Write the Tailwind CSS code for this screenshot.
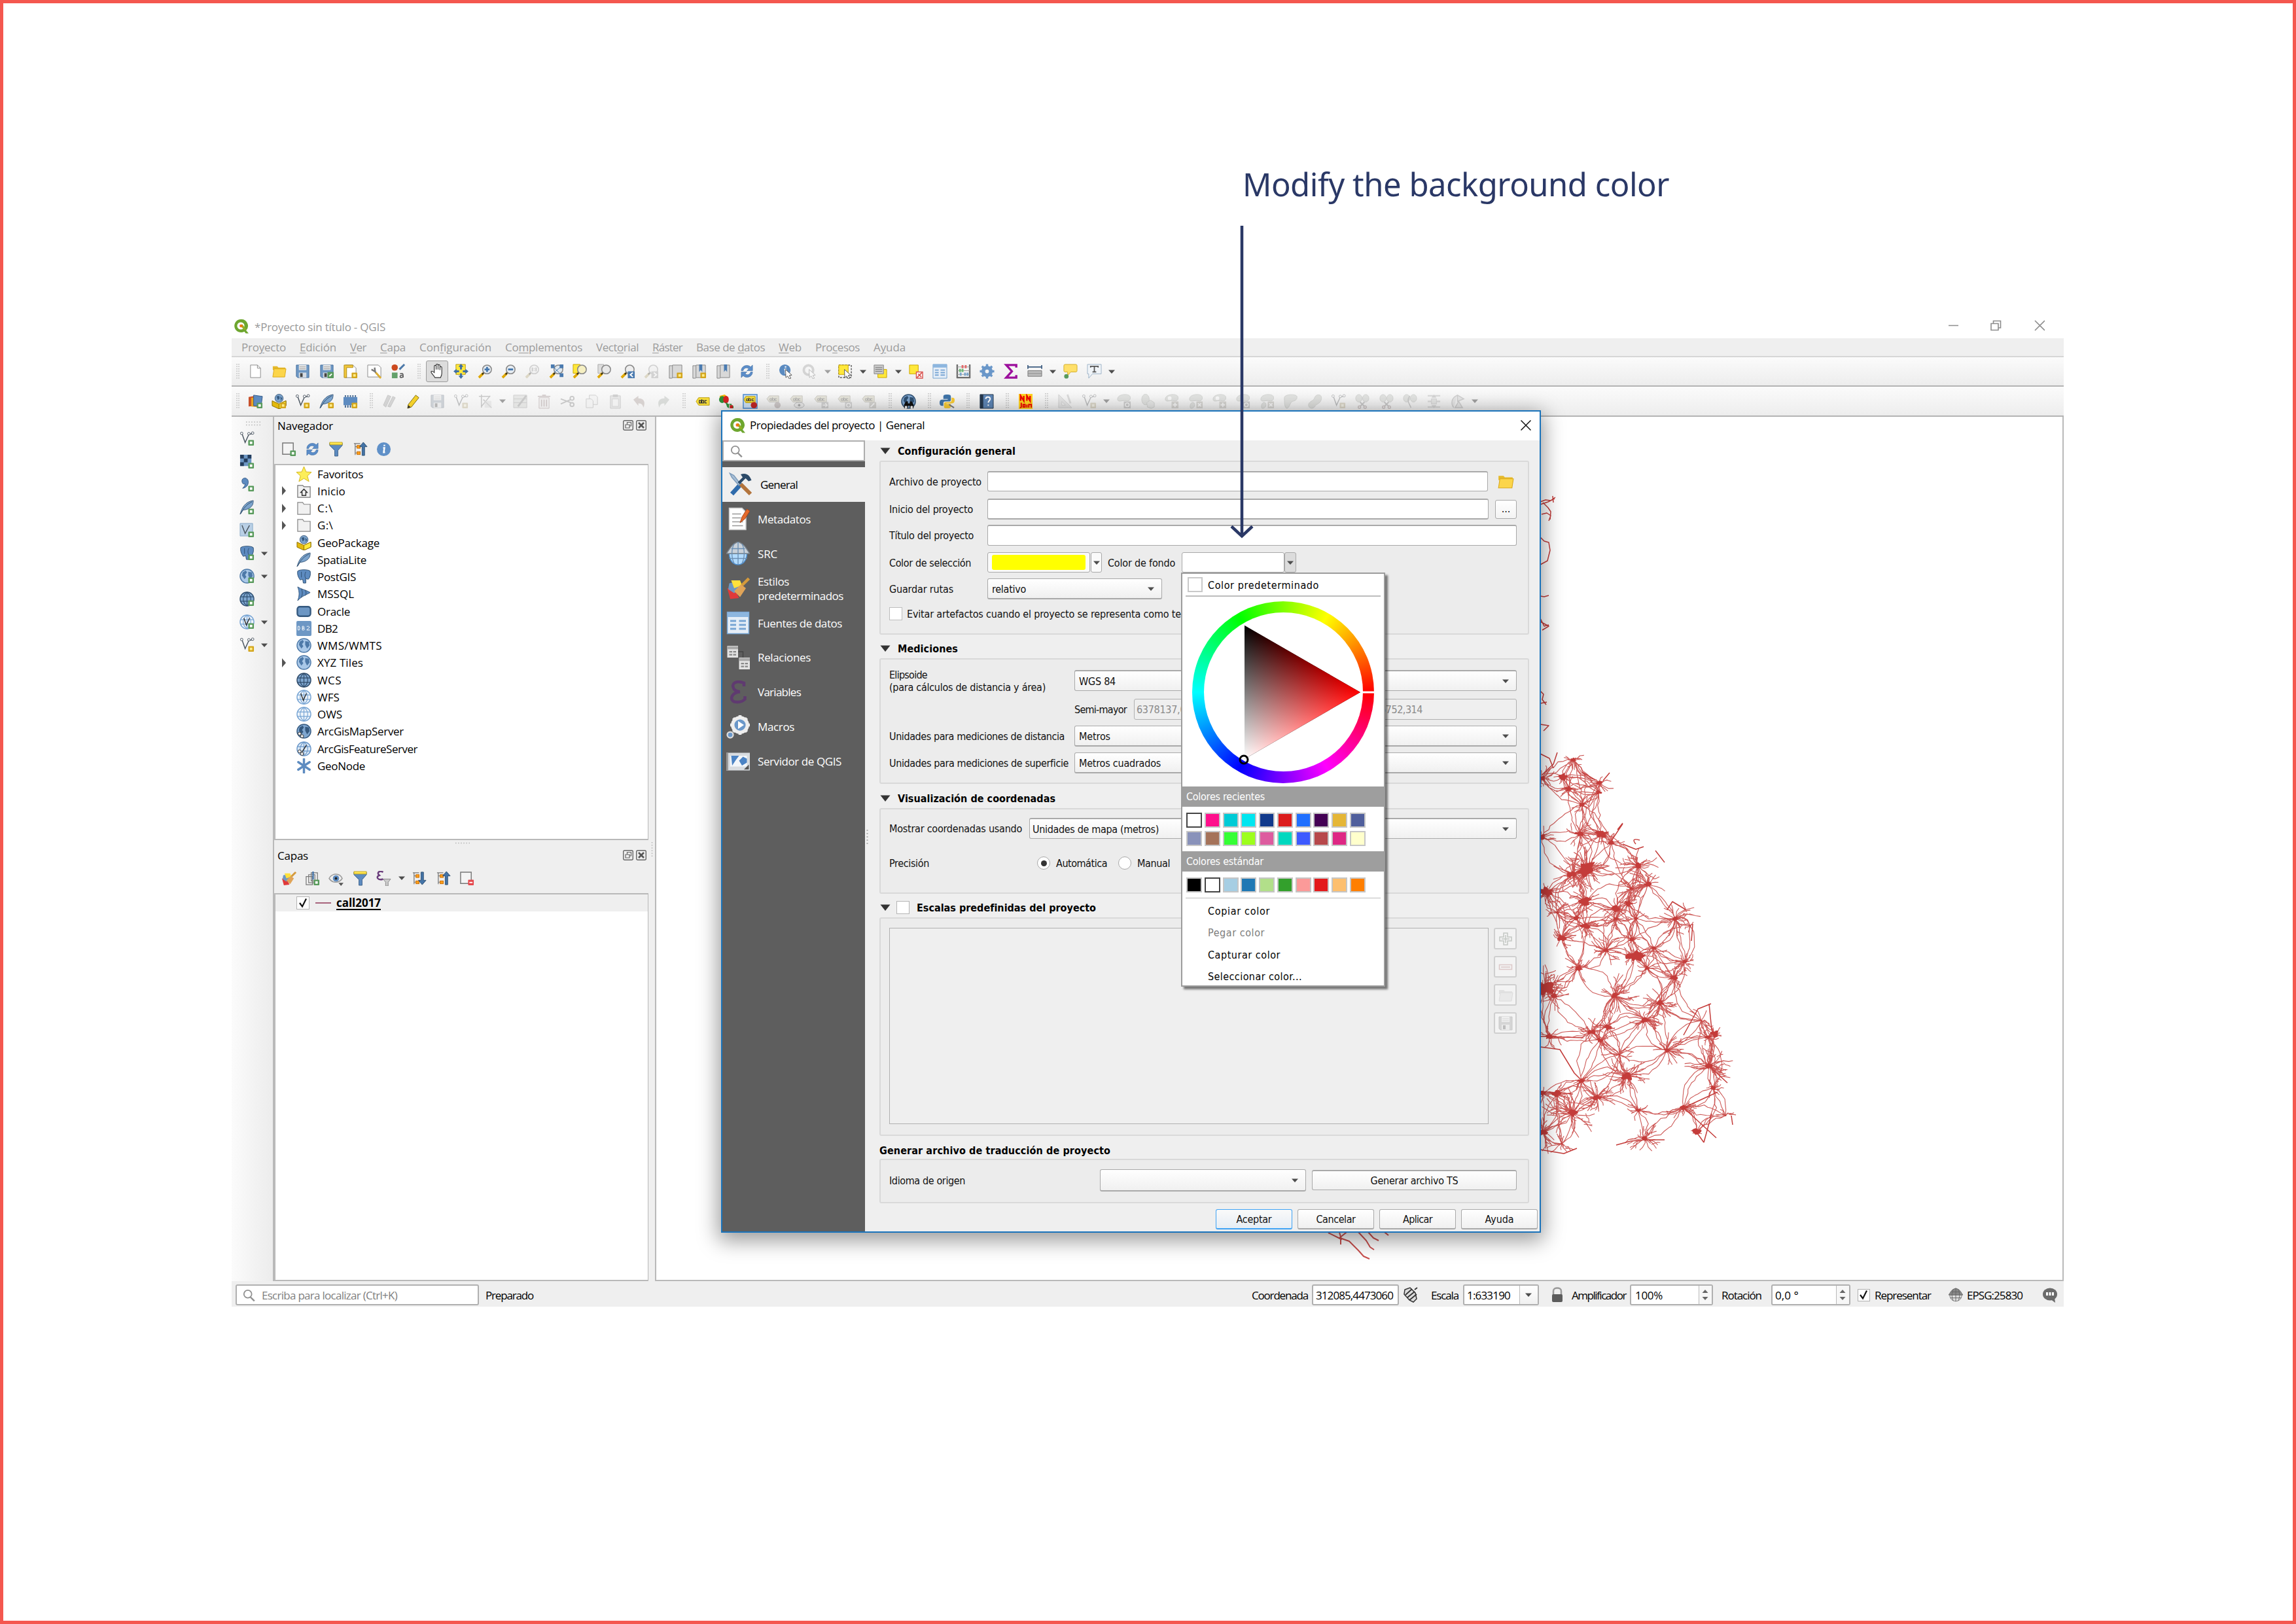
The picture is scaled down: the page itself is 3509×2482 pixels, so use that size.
<!DOCTYPE html>
<html lang="es">
<head>
<meta charset="utf-8">
<title>Propiedades del proyecto | General</title>
<script src="https://cdn.jsdelivr.net/npm/@tailwindcss/browser@4"></script>
</head>
<body class="bg-white">
<main class="relative w-[3509px] h-[2482px] overflow-hidden border-[5px] border-[#f4574f] bg-white font-['Open_Sans','Noto_Sans',sans-serif] text-[17px] leading-none text-black">

<!-- main window -->
<section class="absolute left-[349px] top-[475px] w-[2800px] h-[1517px] flex flex-col bg-white">
  <header class="h-[37px] flex items-center text-[#999]">
    <svg data-i="qgis" viewBox="0 0 24 24" class="ml-[3px] size-[23px]"></svg>
    <span data-w="200" class="ml-[9px] mt-[2px]">*Proyecto sin título - QGIS</span>
    <svg class="ml-auto mr-[29px] mb-[3px] w-[150px] h-[20px]" viewBox="0 0 150 20" fill="none" stroke="#8c8c8c" stroke-width="1.6"><path d="M3 10.500h15M68 7.500h11v10h-11zM71.500 7v-3.500h11v10.500h-3M135 3l15 15M150 3l-15 15"/></svg>
  </header>
  <nav id="menu" class="h-[29px] pl-[15px] flex items-center gap-[21px] bg-[#efefef] border-b-2 border-[#d6d6d6] text-[#9b9b9b]"></nav>
  <div data-bar="h file folder save saveas layout layoutmgr style H hand! pan zoomin zoomout zoom11- zoomfull zoomsel zoomlayer zoomlast zoomnext- newbook bookadd book refresh H identify identifyrun- a- select a selform a desel table abacus gear sigma measure a tip textann a" class="h-[45px] flex items-center bg-linear-to-b from-[#fbfbfb] to-[#ededed] border-b-2 border-[#b3b3b3]"></div>
  <div data-bar="h datasrc gpkgadd vnew feathernew memnew H pencils- pencil save- vnew- node- a- tableedit- trash- cut- copy- paste- undo- redo- H abc diagram abcpin abco1- abco2- abco3- abco4- abco5- H metasearch H python H help H nnjoin H ruler- vnew- a- sh1- sh2- sh3- sh4- sh3- sh1- sh4- sh5- sh6- vnew- sh7- sh7- sh8- sh9- sh10- a-" class="h-[46px] flex items-center bg-linear-to-b from-[#fbfbfb] to-[#ededed] border-b-2 border-[#b3b3b3]"></div>

  <div class="flex h-[1321px]">
    <aside class="w-[63px] bg-linear-to-r from-[#fbfbfb] to-[#ececec] flex flex-col items-start">
      <svg class="ml-[21px] mt-1.5 w-[26px] h-[8px] shrink-0"><path d="M1 2h24M1 6.500h24" stroke="#b5b5b5" stroke-width="1.500" stroke-dasharray="1.500 2.600"/></svg>
      <div id="strip" class="mt-[2px] flex flex-col"></div>
    </aside>

    <div class="w-[584px] border-l-2 border-[#b9b9b9] bg-[#efefef] flex flex-col">
      <div class="h-[26px] pl-[5px] pr-[13px] flex items-center">
        <span data-w="85">Navegador</span>
        <svg data-i="float" viewBox="0 0 16 16" class="ml-auto size-4"></svg><svg data-i="close" viewBox="0 0 16 16" class="ml-1 size-4"></svg>
      </div>
      <div data-bar="newlayer refresh filter collapse info" class="h-[46px] pl-[4px] flex items-center"></div>
      <div id="tree" class="h-[575px] mr-[10px] bg-white border-2 border-r border-[#b9b9b9]"></div>
      <div class="relative h-[46px] pl-[5px] pr-[13px] flex items-center">
        <svg class="absolute left-[276px] top-[3px] w-[26px] h-[3px]"><path d="M1 1.500h24" stroke="#b5b5b5" stroke-width="1.500" stroke-dasharray="1.500 2.600"/></svg>
        <svg class="absolute left-[576px] top-[2px] w-[3px] h-[26px]"><path d="M1.500 1v24" stroke="#b5b5b5" stroke-width="1.500" stroke-dasharray="1.500 2.600"/></svg>
        <span data-w="47">Capas</span>
        <svg data-i="float" viewBox="0 0 16 16" class="ml-auto size-4"></svg><svg data-i="close" viewBox="0 0 16 16" class="ml-1 size-4"></svg>
      </div>
      <div data-bar="brush group eye filter epsfilter a expand collapse removelayer" class="h-[35px] pl-[4px] pb-[11px] flex items-center"></div>
      <div class="flex-1 mr-[10px] bg-white border-2 border-r border-[#b9b9b9]">
        <div class="h-[26px] bg-[#efefef] flex items-center">
          <span class="ml-[32px] size-5 bg-white border border-[#b5b5b5] flex items-center justify-center"><svg data-i="check" viewBox="0 0 16 16" class="size-4"></svg></span>
          <span class="ml-[9px] w-[24px] h-[1.5px] bg-[#a8647c]"></span>
          <span data-w="68" class="ml-2 font-bold border-b-2 border-black leading-[19px]">call2017</span>
        </div>
      </div>
    </div>

    <div class="flex-1 overflow-hidden bg-white border-l-2 border-r-2 border-b-2 border-[#b9b9b9]">
      <svg id="map" class="w-[2149px] h-[1319px]" viewBox="1003 637 2149 1319" fill="none" stroke="#c43c3a" stroke-linejoin="round"></svg>
    </div>
  </div>

  <footer class="h-[39px] pt-[3px] bg-[#efefef] flex items-center whitespace-nowrap">
    <div class="ml-[6px] w-[372px] h-8 rounded-[3px] bg-white border-2 border-[#b0b0b0] flex items-center text-[#808080]">
      <svg data-i="search" viewBox="0 0 16 16" class="ml-[9px] size-[19px]"></svg><span data-w="207" class="ml-[10px]">Escriba para localizar (Ctrl+K)</span>
    </div>
    <span data-w="73" class="ml-[10px]">Preparado</span>
    <span data-w="86" class="ml-auto">Coordenada</span>
    <div class="ml-[6px] w-[133px] h-8 rounded-[3px] bg-white border-2 border-[#b0b0b0] pl-1 flex items-center"><span data-w="118">312085,4473060</span></div>
    <svg data-i="mouse" viewBox="0 0 24 24" class="ml-[6px] size-6"></svg>
    <span data-w="42" class="ml-[19px]">Escala</span>
    <div class="ml-[7px] w-[116px] h-8 rounded-[3px] bg-white border-2 border-[#b0b0b0] pl-1 flex items-center"><span data-w="66">1:633190</span><span class="ml-auto w-[28px] h-full border-l border-[#bbb] bg-linear-to-b from-white to-[#f0f0f0] flex items-center justify-center"><svg data-i="down" viewBox="0 0 12 12" class="size-3"></svg></span></div>
    <svg data-i="lock" viewBox="0 0 20 24" class="ml-[18px] w-5 h-6"></svg>
    <span data-w="83" class="ml-[12px]">Amplificador</span>
    <div class="ml-[6px] w-[127px] h-8 rounded-[3px] bg-white border-2 border-[#b0b0b0] pl-1.5 flex items-center"><span data-w="42">100%</span><span class="ml-auto w-[20px] h-full border-l border-[#bbb] bg-[#f7f7f7] flex items-center justify-center"><svg data-i="spin" viewBox="0 0 12 24" class="w-3 h-6"></svg></span></div>
    <span data-w="61" class="ml-[13px]">Rotación</span>
    <div class="ml-[15px] w-[121px] h-8 rounded-[3px] bg-white border-2 border-[#b0b0b0] pl-1 flex items-center"><span data-w="36">0,0 °</span><span class="ml-auto w-[20px] h-full border-l border-[#bbb] bg-[#f7f7f7] flex items-center justify-center"><svg data-i="spin" viewBox="0 0 12 24" class="w-3 h-6"></svg></span></div>
    <span class="ml-[11px] size-[19px] bg-white border border-[#b0b0b0] flex items-center justify-center"><svg data-i="check" viewBox="0 0 16 16" class="size-4"></svg></span>
    <span data-w="86" class="ml-[7px]">Representar</span>
    <svg data-i="globegray" viewBox="0 0 24 24" class="ml-[27px] size-[22px]"></svg>
    <span data-w="85" class="ml-[6px]">EPSG:25830</span>
    <svg data-i="bubble" viewBox="0 0 24 24" class="ml-[30px] mr-[9px] size-6"></svg>
  </footer>
</section>

<!-- project properties dialog -->
<section class="absolute left-[1097px] top-[622px] w-[1253px] h-[1257px] flex flex-col bg-[#efefef] border-2 border-[#1a73bb] shadow-[0_8px_30px_4px_rgba(0,0,0,0.4)]">
  <header class="h-[44px] shrink-0 bg-white flex items-center">
    <svg data-i="qgis" viewBox="0 0 24 24" class="ml-[11px] mb-[3px] size-6"></svg>
    <span data-w="267" class="ml-[7px] mb-[3px]">Propiedades del proyecto | General</span>
    <svg class="ml-auto mr-[13px] mb-[3px] size-4" viewBox="0 0 16 16" stroke="#111" stroke-width="1.500"><path d="M.500.500l15 15M15.500.500l-15 15"/></svg>
  </header>
  <div class="flex flex-1">
    <aside class="w-[218px] bg-[#5e5e5e] flex flex-col text-white">
      <div class="h-8 mb-[9px] bg-white border-2 border-[#adadad] flex items-center text-[#909090]"><svg data-i="search" viewBox="0 0 16 16" class="ml-[10px] size-[19px]"></svg></div>
      <div id="tabs" class="flex flex-col"></div>
    </aside>

    <div class="relative w-[1031px] pl-[22px] pr-[16px] flex flex-col whitespace-nowrap font-['DejaVu_Sans_Condensed','DejaVu_Sans',sans-serif] [font-stretch:condensed] text-[16px] text-[#111] [&_[data-w]]:translate-y-px">
      <svg class="absolute left-[2px] top-[594px] w-[3px] h-[26px]"><path d="M1.500 1v24" stroke="#b0b0b0" stroke-width="2" stroke-dasharray="2 3"/></svg>

      <div class="h-[31px] pl-[1px] flex items-center font-bold text-black"><svg data-i="down2" viewBox="0 0 16 12" class="w-4 h-3"></svg><span data-w="180" class="ml-[11px]">Configuración general</span></div>
      <div class="h-[266px] shrink-0 border-2 border-[#d9d9d9] rounded-[3px] bg-[#ececec] pl-[13px] pt-[14px]">
        <div class="h-[31px] flex items-center"><span class="w-[150px]"><span data-w="141">Archivo de proyecto</span></span><span class="w-[765px] h-[31px] rounded-[3px] bg-white border border-t-2 border-[#a9a9a9]"></span><svg data-i="folder" viewBox="0 0 24 24" class="ml-[14px] size-[26px]"></svg></div>
        <div class="mt-[11px] h-8 flex items-center"><span class="w-[150px]"><span data-w="128">Inicio del proyecto</span></span><span class="w-[766px] h-8 rounded-[3px] bg-white border border-y-2 border-[#a9a9a9]"></span><span class="ml-[10px] w-[33px] h-[29px] rounded-[3px] border border-[#a9a9a9] bg-linear-to-b from-white to-[#f3f3f3] flex items-center justify-center">...</span></div>
        <div class="mt-[8px] h-8 flex items-center"><span class="w-[150px]"><span data-w="129">Título del proyecto</span></span><span class="w-[809px] h-8 rounded-[3px] bg-white border border-t-2 border-[#a9a9a9]"></span></div>
        <div class="mt-[10px] h-[31px] flex items-center"><span class="w-[150px]"><span data-w="125">Color de selección</span></span>
          <span class="w-[157px] h-[31px] rounded-[3px] border border-[#a9a9a9] bg-[#fafafa] p-[3px] px-[6px] flex"><span class="flex-1 rounded-[3px] bg-[#ffff00]"></span></span><span class="ml-[1px] w-[17px] h-[31px] rounded-[3px] border border-[#a9a9a9] bg-[#fafafa] flex items-center justify-center"><svg data-i="down" viewBox="0 0 12 12" class="size-3"></svg></span>
          <span data-w="103" class="ml-[9px]">Color de fondo</span>
          <span class="ml-[10px] w-[157px] h-[31px] rounded-[3px] border border-[#a9a9a9] bg-white"></span><span class="w-[18px] h-[31px] rounded-[3px] border border-[#a9a9a9] bg-[#dcdcdc] flex items-center justify-center"><svg data-i="down" viewBox="0 0 12 12" class="size-3"></svg></span></div>
        <div class="mt-[9px] h-8 flex items-center"><span class="w-[150px]"><span data-w="98">Guardar rutas</span></span><span class="w-[267px] h-8 pl-[6px] pr-[10px] rounded-[3px] border border-b-2 border-[#a9a9a9] bg-linear-to-b from-white to-[#f0f0f0] flex items-center justify-between"><span data-w="52">relativo</span><svg data-i="down" viewBox="0 0 12 12" class="size-3"></svg></span></div>
        <div class="mt-[12px] h-5 flex items-center"><span class="size-5 bg-white border border-[#bdbdbd]"></span><span data-w="419" class="ml-[7px]">Evitar artefactos cuando el proyecto se representa como te</span></div>
      </div>

      <div class="h-[36px] pl-[1px] pt-[6px] flex items-center font-bold text-black"><svg data-i="down2" viewBox="0 0 16 12" class="w-4 h-3"></svg><span data-w="92" class="ml-[11px]">Mediciones</span></div>
      <div class="h-[192px] shrink-0 border-2 border-[#d9d9d9] rounded-[3px] bg-[#ececec] pl-[13px] pt-[16px]">
        <div class="h-8 flex items-center"><span class="w-[283px] leading-[19px]"><span data-w="58">Elipsoide</span><br><span data-w="239">(para cálculos de distancia y área)</span></span><span class="w-[676px] h-8 pl-[6px] pr-[10px] rounded-[3px] border border-t-2 border-[#a9a9a9] bg-linear-to-b from-white to-[#f0f0f0] flex items-center justify-between"><span data-w="56">WGS 84</span><svg data-i="down" viewBox="0 0 12 12" class="size-3"></svg></span></div>
        <div class="mt-[12px] h-8 pl-[283px] flex items-center"><span class="w-[91px]"><span data-w="80">Semi-mayor</span></span><span class="w-[250px] h-8 pl-[3px] rounded-[3px] border border-[#b0b0b0] bg-[#efefef] flex items-center text-[#8a8a8a]"><span data-w="93">6378137,000</span></span><span class="ml-[95px] w-[240px] h-8 pl-[4px] rounded-[3px] border border-[#b0b0b0] bg-[#efefef] flex items-center text-[#8a8a8a]"><span data-w="91">6356752,314</span></span></div>
        <div class="mt-[9px] h-8 flex items-center"><span class="w-[283px]"><span data-w="268">Unidades para mediciones de distancia</span></span><span class="w-[676px] h-8 pl-[6px] pr-[10px] rounded-[3px] border border-b-2 border-[#a9a9a9] bg-linear-to-b from-white to-[#f0f0f0] flex items-center justify-between"><span data-w="48">Metros</span><svg data-i="down" viewBox="0 0 12 12" class="size-3"></svg></span></div>
        <div class="mt-[9px] h-8 flex items-center"><span class="w-[283px]"><span data-w="274">Unidades para mediciones de superficie</span></span><span class="w-[676px] h-8 pl-[6px] pr-[10px] rounded-[3px] border border-b-2 border-[#a9a9a9] bg-linear-to-b from-white to-[#f0f0f0] flex items-center justify-between"><span data-w="125">Metros cuadrados</span><svg data-i="down" viewBox="0 0 12 12" class="size-3"></svg></span></div>
      </div>

      <div class="h-[37px] pl-[1px] pt-[7px] flex items-center font-bold text-black"><svg data-i="down2" viewBox="0 0 16 12" class="w-4 h-3"></svg><span data-w="241" class="ml-[11px]">Visualización de coordenadas</span></div>
      <div class="h-[131px] shrink-0 border-2 border-[#d9d9d9] rounded-[3px] bg-[#ececec] pl-[13px] pt-[13px]">
        <div class="h-8 flex items-center"><span class="w-[214px]"><span data-w="203">Mostrar coordenadas usando</span></span><span class="w-[745px] h-8 pl-[4px] pr-[10px] rounded-[3px] border border-t-2 border-[#a9a9a9] bg-linear-to-b from-white to-[#f0f0f0] flex items-center justify-between"><span data-w="193">Unidades de mapa (metros)</span><svg data-i="down" viewBox="0 0 12 12" class="size-3"></svg></span></div>
        <div class="mt-[27px] h-5 flex items-center"><span class="w-[226px]"><span data-w="61">Precisión</span></span><span class="size-5 rounded-full bg-white border border-[#a9a9a9] flex items-center justify-center"><span class="size-[9px] rounded-full bg-[#333]"></span></span><span data-w="78" class="ml-[9px]">Automática</span><span class="ml-[17px] size-5 rounded-full bg-white border border-[#a9a9a9]"></span><span data-w="50" class="ml-[9px]">Manual</span></div>
      </div>

      <div class="h-[36px] pl-[1px] pt-[6px] flex items-center font-bold text-black"><svg data-i="down2" viewBox="0 0 16 12" class="w-4 h-3"></svg><span class="ml-[9px] size-5 bg-white border border-[#b5b5b5]"></span><span data-w="274" class="ml-[11px]">Escalas predefinidas del proyecto</span></div>
      <div class="h-[334px] shrink-0 border-2 border-[#d9d9d9] rounded-[3px] bg-[#ececec] pl-[13px] pt-[14px] flex items-start">
        <div class="w-[916px] h-[300px] border border-[#b0b0b0] bg-[#efefef]"></div>
        <div class="ml-2 flex flex-col gap-[10px]">
          <span class="w-[35px] h-[33px] rounded-[3px] border-2 border-[#cfcfcf] bg-[#f3f3f3] flex items-center justify-center"><svg viewBox="0 0 24 24" class="size-6" fill="none" stroke="#c4c8c4" stroke-width="1.500"><path d="M9 3h6v6h6v6h-6v6H9v-6H3V9h6zM12 6v12M6 12h12"/></svg></span>
          <span class="w-[35px] h-[33px] rounded-[3px] border-2 border-[#cfcfcf] bg-[#f3f3f3] flex items-center justify-center"><svg viewBox="0 0 24 24" class="size-6" fill="none" stroke="#dcc8c8" stroke-width="1.500"><path d="M2.500 8.500h19v7h-19zM5 12h14"/></svg></span>
          <span class="w-[35px] h-[33px] rounded-[3px] border-2 border-[#cfcfcf] bg-[#f3f3f3] flex items-center justify-center"><svg data-i="folder" viewBox="0 0 24 24" class="size-6 opacity-30 grayscale"></svg></span>
          <span class="w-[35px] h-[33px] rounded-[3px] border-2 border-[#cfcfcf] bg-[#f3f3f3] flex items-center justify-center"><svg data-i="save" viewBox="0 0 24 24" class="size-6 opacity-30 grayscale"></svg></span>
        </div>
      </div>

      <div class="h-[35px] pt-[8px] flex items-center font-bold text-black"><span data-w="353">Generar archivo de traducción de proyecto</span></div>
      <div class="h-[68px] shrink-0 border-2 border-[#d9d9d9] rounded-[3px] bg-[#ececec] pl-[13px] pt-[14px] flex items-start">
        <span class="w-[322px] h-[34px] flex items-center"><span data-w="116">Idioma de origen</span></span>
        <span class="w-[315px] h-[34px] pr-[10px] rounded-[3px] border border-b-2 border-[#a9a9a9] bg-linear-to-b from-white to-[#f0f0f0] flex items-center justify-end"><svg data-i="down" viewBox="0 0 12 12" class="size-3"></svg></span>
        <span class="ml-[9px] w-[313px] h-[31px] mt-px rounded-[3px] border border-t-2 border-[#a9a9a9] bg-linear-to-b from-white to-[#f0f0f0] flex items-center justify-center"><span data-w="134">Generar archivo TS</span></span>
      </div>
      <div class="mt-[9px] mr-[-13px] flex justify-end gap-[8px] *:w-[117px] *:h-[31px] *:rounded-[3px] *:flex *:items-center *:justify-center *:border *:border-b-2">
        <span class="border-[#3fa3f5] bg-linear-to-b from-[#fafafa] to-[#e6edf4]"><span data-w="54">Aceptar</span></span>
        <span class="border-[#a9a9a9] bg-linear-to-b from-white to-[#f0f0f0]"><span data-w="60">Cancelar</span></span>
        <span class="border-[#a9a9a9] bg-linear-to-b from-white to-[#f0f0f0]"><span data-w="45">Aplicar</span></span>
        <span class="border-[#a9a9a9] bg-linear-to-b from-white to-[#f0f0f0]"><span data-w="44">Ayuda</span></span>
      </div>

      <!-- colour menu -->
      <div class="absolute left-[483px] top-[202px] w-[312px] h-[633px] bg-white border-2 border-[#9c9c9c] shadow-[4px_4px_3px_rgba(0,0,0,0.5)] flex flex-col text-black">
        <div class="h-[33px] shrink-0 pl-[8px] flex items-center"><span class="size-[23px] border-2 border-[#c9c9c9]"></span><span data-w="170" class="ml-[8px]">Color predeterminado</span></div>
        <div class="mx-[5px] h-[1.5px] shrink-0 bg-[#bdbdbd]"></div>
        <div class="relative ml-[15px] mt-[7px] size-[278px] shrink-0 rounded-full bg-[conic-gradient(from_90deg,#f00,#f0f,#00f,#0ff,#0f0,#ff0,#f00)]">
          <div class="absolute inset-[17.5px] rounded-full bg-white"></div>
          <svg class="absolute inset-0 size-[278px] isolate" viewBox="0 0 278 278">
            <defs>
              <linearGradient id="gr" gradientUnits="userSpaceOnUse" x1="80" y1="37" x2="168.500" y2="190"><stop stop-color="#000"/><stop offset="1" stop-color="#f00"/></linearGradient>
              <linearGradient id="gw" gradientUnits="userSpaceOnUse" x1="168.500" y1="88" x2="80" y2="241"><stop stop-color="#000"/><stop offset="1" stop-color="#0ff"/></linearGradient>
            </defs>
            <path d="M80 37L257 139L80 241z" fill="url(#gr)"/>
            <path class="mix-blend-screen" d="M80 37L257 139L80 241z" fill="url(#gw)"/>
            <path d="M260 139h18" stroke="#fff" stroke-width="3"/>
            <circle cx="79" cy="242" r="6" fill="none" stroke="#000" stroke-width="3"/>
          </svg>
        </div>
        <div class="mt-[5px] h-[31px] shrink-0 pl-[6px] bg-[#9e9e9e] flex items-center text-white"><span data-w="120">Colores recientes</span></div>
        <div id="recent" class="h-[68px] shrink-0 pt-[9px] pl-[6px] grid grid-cols-[repeat(10,27.75px)] auto-rows-[28px]"></div>
        <div class="h-[31px] shrink-0 pl-[6px] bg-[#9e9e9e] flex items-center text-white"><span data-w="118">Colores estándar</span></div>
        <div id="standard" class="h-[40px] shrink-0 pt-[9px] pl-[6px] grid grid-cols-[repeat(10,27.75px)]"></div>
        <div class="mx-[5px] h-[1.5px] shrink-0 bg-[#bdbdbd]"></div>
        <div class="pl-[39px] pt-[2px] *:h-[33.5px] *:flex *:items-center">
          <div><span data-w="95">Copiar color</span></div>
          <div class="text-[#7d7d7d]"><span data-w="87">Pegar color</span></div>
          <div><span data-w="111">Capturar color</span></div>
          <div><span data-w="144">Seleccionar color...</span></div>
        </div>
      </div>
    </div>
  </div>
</section>

<!-- callout -->
<p data-w="652" class="absolute left-[1894px] top-[246px] text-[49px] leading-[60px] whitespace-nowrap text-[#2a3866] font-['Noto_Sans',sans-serif]">Modify the background color</p>
<svg class="absolute left-[1873px] top-[339px] w-[40px] h-[482px]" viewBox="1878 344 40 482" fill="none" stroke="#2a3866" stroke-width="4.500"><path d="M1898 345v474M1882 804.500l16 15 16-15"/></svg>
</main>

<script>
const badge = (c, f = '#fff') => `<rect x="14" y="14" width="9" height="9" rx="1" fill="${c}"/><rect x="16.500" y="16.500" width="4" height="4" fill="${f}"/>`;
const G = badge('#589a5b'), Y = badge('#d3a51c', '#ffec8b');
const paper = '<path d="M4 2h11l5 5v15H4z" fill="#fff" stroke="#8a8a8a"/><path d="M15 2v5h5" fill="none" stroke="#8a8a8a"/>';
const floppy = '<path d="M2 2h20v20H4l-2-2z" fill="#6d97c4" stroke="#456f9c"/><path d="M6 2h12v8H6z" fill="#e8e8e8"/><path d="M7 5h10M7 8h10" stroke="#9a9a9a"/><path d="M6 14h12v8H6z" fill="#d5dce4"/><path d="M8 15h4v6H8z" fill="#444"/>';
const lens = (f, x = '') => `<path d="M2 22l7-7" stroke="#e0a800" stroke-width="4"/><path d="M7 17l3-3" stroke="#222" stroke-width="2"/><circle cx="15" cy="9" r="7" fill="${f}" stroke="#888" stroke-width="1.600"/>${x}`;
const vee = '<path d="M4 4l5 14L15 5l6-1" fill="none" stroke="#4a5560" stroke-width="1.500"/><g fill="#fff" stroke="#4a5560"><circle cx="3.500" cy="3.500" r="2"/><circle cx="15" cy="4" r="2"/><circle cx="21" cy="3" r="2"/></g>';
const feather = '<path d="M1 23C4 12 9 3 22 1c0 5-1 9-6 12-3 2-7 3-10 3z" fill="#7ba3cc" stroke="#3c5a7a"/><path d="M2 22C7 12 12 7 20 3" stroke="#2f4d6c" fill="none"/>';
const globe = (a, b, l) => `<circle cx="12" cy="12" r="11" fill="${a}" stroke="${b}" stroke-width="1.500"/>${l ? `<path d="M12 1v22M1.500 8.500h21M1.500 15.500h21M12 1C4 7 4 17 12 23M12 1c8 6 8 16 0 22" stroke="${b}" stroke-width="1.200" fill="none"/>` : `<path d="M5 6l5-3 2 3-3 4 2 3-3 4-4-6zM14 5l6 1 1 6-4 5-3-6z" fill="${b}"/>`}`;
const box = '<path d="M1 11l11 5 11-5v8l-11 5-11-5z" fill="#e3b90d" stroke="#8a6d00"/><path d="M12 16l11-5v8l-11 5z" fill="#ffe83b" stroke="#8a6d00"/><circle cx="12" cy="7" r="6.500" fill="#7ba3cc" stroke="#3c5a7a"/><path d="M8 4l4-1 1 4-3 3zM14 4l3 3-2 4z" fill="#35597f"/>';
const gearP = '<circle cx="12" cy="12" r="6" fill="none" stroke="#6a97c9" stroke-width="6"/><path d="M12 .500v5M12 18.500v5M.500 12h5M18.500 12h5M4 4l3.500 3.500M16.500 16.500L20 20M20 4l-3.500 3.500M7.500 16.500L4 20" stroke="#6a97c9" stroke-width="3.600"/>';
const arrowP = '<path d="M11 9l10 9-4 .500 2.500 4.500-2.500 1-2.500-4.500-3 2.500z" fill="#fff" stroke="#555"/>';
const book = '<path d="M2 3h4l2-1h14v20H8l-2 1H2z" fill="#d8d8d8" stroke="#858585"/><path d="M7 2v20" stroke="#858585"/>';
const tag = '<path d="M2 12l4-6h17v12H6z" fill="#f6dd3a" stroke="#b89b10"/><path d="M7 14.500v-4h3v4zm4-6v6h3v-4h-3m8 0h-3v4h3" fill="none" stroke="#333" stroke-width="1.300"/>';
const tagS = '<path d="M1 8l4-5h15v10H5z" fill="#d9c96a" stroke="#8a8050"/><path d="M6 10.500v-3h3v3zm4-5v5h3v-3h-3m7 0h-3v3h3" fill="none" stroke="#333"/>';
const grp = '<path d="M4 3v18M4 8h5M4 18h5M2 3h10" stroke="#777" fill="none" stroke-width="1.300"/><rect x="7" y="6" width="5" height="4.500" fill="#ff9f1c" stroke="#c76d00"/><rect x="7" y="16" width="5" height="4.500" fill="#ff9f1c" stroke="#c76d00"/>';
const blob = '<path d="M2 8c0-8 18-9 20-4 2 6-3 8-6 7-5-2-14 4-14-3z" fill="#b9c3b2" stroke="#8f9a88"/>';
const blob2 = '<path d="M3 20c0-7 6-8 7-4s-2 7-5 7c-2 0-2-1-2-3z" fill="#b9c3b2" stroke="#8f9a88"/>';
const I = {
  qgis: '<path d="M11.500 1A10.500 10.500 0 1 0 17 20.600l2.500 2.900H24l-4-4.800A10.500 10.500 0 0 0 11.500 1z" fill="#6ea62f"/><circle cx="11.500" cy="11.500" r="5.800" fill="#fff"/><path d="M10 10.500l4-1.500 6 8-3 1z" fill="#93b023"/><circle cx="12" cy="11.500" r="2.500" fill="#ee7913"/>',
  file: paper,
  folder: '<path d="M2 4h7l2 2h11v4H2z" fill="#e5b92b"/><path d="M4 8h19l-2 13H2z" fill="#fcd54a" stroke="#d9a91d"/>',
  save: floppy,
  saveas: floppy + '<rect x="13" y="13" width="10" height="10" rx="1" fill="#589a5b"/><path d="M16 20l4-4" stroke="#fff" stroke-width="2"/>',
  layout: '<path d="M4 2h12l5 5v15H4z" fill="#fff" stroke="#8a8a8a"/><path d="M2 2h14v4H6v16H2z" fill="#f0c63c" stroke="#b18d16"/>' + Y,
  layoutmgr: '<path d="M1 2h17l4 4v15H1z" fill="#fff" stroke="#8a8a8a"/><path d="M7 9l5 3M12 6l1 7 8 9" stroke="#777" stroke-width="2.500" fill="none"/><path d="M14 14l8 9" stroke="#e0b030" stroke-width="3"/>',
  style: '<circle cx="6.500" cy="6" r="5" fill="#cc4a1f"/><path d="M14 9l8-8" stroke="#4c78a8" stroke-width="3"/><rect x="2" y="14" width="9" height="9" fill="#63a06a"/><path d="M15 16c5-2 5 0 5 6M20 18c-6 0-6 4-3 4 2 0 3-2 3-2" fill="none" stroke="#555" stroke-width="1.600"/>',
  hand: '<path d="M8 22c-1-3-6-7-6-9s3-1 5 1V4c0-2 3-2 3 0v5V2c0-2 3-2 3 0v7-6c0-2 3-2 3 0v7-4c0-2 3-2 3 0v9c0 3-1 5-2 7z" fill="#fff" stroke="#333" stroke-width="1.200"/>',
  pan: '<path d="M4 1h15v16H4z" fill="#ffe83b" stroke="#b89b10"/><path d="M12 0l4 5h-2.500v4h-3V5H8zM12 24l4-5h-2.500v-4h-3v4H8zM0 12l5-4v2.500h4v3H5V16zM24 12l-5-4v2.500h-4v3h4V16z" fill="#3f6fa5"/>',
  zoomin: lens('#e6ecf2', '<path d="M15 5v8M11 9h8" stroke="#4577ad" stroke-width="3"/>'),
  zoomout: lens('#e6ecf2', '<path d="M11 9h8" stroke="#4577ad" stroke-width="3"/>'),
  zoom11: lens('#eee', '<path d="M12 6v6M18 6v6M15 7v1M15 10v1" stroke="#666" stroke-width="1.500"/>'),
  zoomfull: lens('#dfe8f0') + '<path d="M3 1h6v6H3zM17 1h6v6h-6zM17 15h6v6h-6z" fill="#4b7bb0"/><path d="M6 4l14 14M20 4L8 14" stroke="#4b7bb0"/>',
  zoomsel: '<path d="M1 1h11v14H1z" fill="#ffe83b" stroke="#c9a500"/>' + lens('#f5efc2'),
  zoomlayer: '<path d="M2 1h9v14H2z" fill="#ddd" stroke="#aaa"/>' + lens('#e8e8e8'),
  zoomlast: lens('#eee') + '<rect x="12" y="12" width="11" height="11" fill="#4b7bb0"/><path d="M20 14l-4 3.500 4 3.500" stroke="#fff" stroke-width="2" fill="none"/>',
  zoomnext: lens('#eee') + '<rect x="12" y="12" width="11" height="11" fill="#999"/><path d="M16 14l4 3.500-4 3.500" stroke="#fff" stroke-width="2" fill="none"/>',
  newbook: book + Y, bookadd: book + '<path d="M12 1h5v12l-2.500-3L12 13z" fill="#4b7bb0"/>' + Y, book: book + '<path d="M13 1h5v12l-2.500-3-2.500 3z" fill="#4b7bb0"/>',
  refresh: '<path d="M3 11C3 3 13 0 18 5l3-3v9h-9l3-3c-4-3-8-1-9 3zM21 13c0 8-10 11-15 6l-3 3v-9h9l-3 3c4 3 8 1 9-3z" fill="#5b8dc9" stroke="#39679e" stroke-width=".6"/>',
  identify: '<circle cx="10" cy="10" r="9" fill="#5a8ac0"/><path d="M11 4v2M9 9h2v6h2" stroke="#fff" stroke-width="2.400" fill="none"/>' + arrowP,
  identifyrun: '<circle cx="10" cy="10" r="7.500" fill="none" stroke="#999" stroke-width="4"/>' + arrowP,
  select: '<path d="M2 2h20v20H2z" fill="none" stroke="#555" stroke-dasharray="3 2" stroke-width="1.500"/><path d="M2 2h15v15H2z" fill="#ffe83b" stroke="#c9a500"/>' + arrowP,
  selform: '<path d="M8 9h14v13H8z" fill="#ffe83b" stroke="#c9a500"/><path d="M2 2h15v14H2z" fill="#c9c9c9" stroke="#888"/><path d="M4 6h11M4 9h11M4 12h11" stroke="#777"/>',
  desel: '<path d="M2 2h14v14H2z" fill="#ffe83b" stroke="#c9a500"/><path d="M13 13h10v10H13z" fill="#fff" stroke="#d9534f" stroke-width="1.500"/><path d="M14 22l8-8M16 16l5 5" stroke="#d9534f" stroke-width="1.800"/>',
  table: '<path d="M1 1h22v22H1z" fill="#e6eef7" stroke="#6f9fcf"/><path d="M1 1h22v5H1z" fill="#8db6df"/><path d="M4 10h6M4 14h6M4 18h6M13 10h7M13 14h7M13 18h7" stroke="#78a5d4" stroke-width="2"/>',
  abacus: '<path d="M2 1v22M22 1v22M1 22h22" stroke="#6d6d6d" stroke-width="2.500"/><path d="M2 5h20M2 11h20M2 17h20" stroke="#999"/><path d="M9 2h3v5H9zM14 2h3v5h-3z" fill="#e36b6b"/><path d="M5 8h3v5H5zM9 8h3v5H9z" fill="#6dbb78"/><path d="M6 14h3v5H6zM13 14h3v5h-3zM17 14h3v5h-3z" fill="#7aa5cc"/>',
  gear: gearP,
  sigma: '<path d="M20 6V2H4l9 10L4 22h16v-4" fill="none" stroke="#9c0f9c" stroke-width="3.500"/>',
  measure: '<path d="M1 5h22M1 2v6M23 2v6" stroke="#3d5c80" stroke-width="1.800"/><path d="M1 11h22v9H1z" fill="#bcbcbc" stroke="#777"/><path d="M1 15.500h22" stroke="#8b8b8b"/>',
  tip: '<path d="M4 1h17q2 0 2 2v8q0 2-2 2h-8l-5 6v-6H4q-2 0-2-2V3q0-2 2-2z" fill="#ffe06a" stroke="#d1ad2b"/><circle cx="6" cy="20" r="3.500" fill="#589a5b"/>',
  textann: '<path d="M1 1h22v15H9l-6 7v-7H1z" fill="#f0f4f8" stroke="#9db3c8"/><path d="M6 6V4h12v2M12 4v9M9 13h6" stroke="#555" stroke-width="1.800" fill="none"/>',
  datasrc: '<path d="M1 5l10-2v16l-10 1z" fill="#c7502b"/><path d="M5 6h12v15l-12-1z" fill="#e8a521"/><path d="M9 2l14 2-2 15H9z" fill="#5d8bc0" stroke="#345a86"/>' + G,
  gpkg: box, gpkgadd: box + Y, vnew: vee + Y, vadd: vee + G, feather, feathernew: feather + Y, featheradd: feather + G,
  memnew: '<path d="M1 5h22v13H1z" fill="#5d8bc0"/><path d="M4 2v3M8 2v3M12 2v3M16 2v3M20 2v3M4 18v4M8 18v4M12 18v4" stroke="#345a86" stroke-width="1.800"/>' + Y,
  pencils: '<path d="M2 18L9 2l5 2-8 17zM9 20l8-16 4 2-8 15z" fill="#999" stroke="#777"/>',
  pencil: '<path d="M3 17L15 2l5 4L8 21l-6 2z" fill="#f3d02b" stroke="#7c6a10"/><path d="M2 23l1-5 4 3z" fill="#333"/>',
  node: '<path d="M2 4h18M6 1v21M6 20L20 3M9 9l13 13" stroke="#777" stroke-width="1.600"/><path d="M11 11h11v11H11z" fill="#bbb" opacity=".6"/>',
  tableedit: '<path d="M1 2h21v20H1z" fill="#c6ccc0" stroke="#888"/><path d="M1 8h21M1 14h21" stroke="#888"/><path d="M8 20L21 3" stroke="#777" stroke-width="3"/>',
  trash: '<path d="M4 6h16v17H4z" fill="#eadede" stroke="#a66"/><path d="M2 4h20M9 2h6M8 9v11M12 9v11M16 9v11" stroke="#a66" stroke-width="1.600"/>',
  cut: '<path d="M1 8l16 6M1 16l16-7" stroke="#777" stroke-width="2"/><g fill="none" stroke="#777" stroke-width="2"><circle cx="19" cy="7" r="3"/><circle cx="19" cy="17" r="3"/></g>',
  copy: '<path d="M8 2h10l3 3v12H8z" fill="#eee" stroke="#888"/><path d="M3 8h8l3 3v11H3z" fill="#eee" stroke="#888"/>',
  paste: '<path d="M4 3h16v20H4z" fill="#ccc" stroke="#888"/><path d="M8 1h8v4H8z" fill="#888"/><path d="M7 8h10v12H7z" fill="#eee" stroke="#999"/>',
  undo: '<path d="M2 9l8-6v4c9 0 12 6 8 15-1-6-4-7-8-7v4z" fill="#c08c7c"/>',
  redo: '<path d="M22 9l-8-6v4c-9 0-12 6-8 15 1-6 4-7 8-7v4z" fill="#9cb09c"/>',
  abc: tag,
  diagram: '<path d="M2 3l8-2 5 4-5 5-8-2z" fill="#f5b800"/><ellipse cx="6" cy="9" rx="5" ry="5.500" fill="#2f8f3a"/><ellipse cx="12" cy="9" rx="4.500" ry="6" fill="#d62222"/><path d="M11 13l3 8 3 2v-7h4v7h3v-4h-3" fill="#2f8f3a"/><rect x="18" y="18" width="5" height="5" fill="#c22"/>',
  abcpin: '<path d="M1 1h22v22H1z" fill="#cfe3f7" stroke="#4b8bd0" stroke-width="1.500"/><path d="M2 9l3-5h15v10H5z" fill="#f6dd3a" stroke="#b89b10"/><path d="M6 11v-3h3v3zm4-5v5h3V8h-3m8 0h-3v3h3" fill="none" stroke="#333"/><circle cx="18" cy="18" r="5" fill="#c22727"/>',
  abco1: tagS + '<circle cx="18" cy="18" r="5" fill="#a77"/>', abco2: tagS + '<ellipse cx="15" cy="18" rx="8" ry="4.500" fill="#ddd" stroke="#555"/><circle cx="15" cy="18" r="2" fill="#333"/>',
  abco3: tagS + '<path d="M12 13h11v10H12z" fill="#999"/><path d="M14 18h7M18 15l3 3-3 3" stroke="#fff" fill="none" stroke-width="1.500"/>', abco4: tagS + '<path d="M12 13h11v10H12z" fill="#999"/><circle cx="17.500" cy="18" r="3" fill="none" stroke="#fff" stroke-width="1.500"/>', abco5: tagS + '<path d="M12 13h11v10H12z" fill="#a99f80"/><path d="M14 21l6-6" stroke="#fff" stroke-width="2"/>',
  metasearch: globe('#7fa6cf', '#2f5072') + '<path d="M5 17l3-5h3v3h3v-3h3l3 5v6h-6v-4h-3v4H5z" fill="#111"/><circle cx="8" cy="21" r="2" fill="#fff"/><circle cx="17" cy="21" r="2" fill="#fff"/>',
  python: '<path d="M12 1c-5 0-6 1-6 4v3h7v1H4c-3 0-4 2-4 5s1 5 4 5h2v-4c0-2 1-3 3-3h6c2 0 3-1 3-3V5c0-3-1-4-6-4z" fill="#3f74a8"/><path d="M12 23c5 0 6-1 6-4v-3h-7v-1h9c3 0 4-2 4-5s-1-4-4-4h-1v4c0 2-1 3-3 3h-6c-2 0-3 1-3 3v3c0 3 0 4 5 4z" fill="#f9cb35"/><path d="M15 17l8 5" stroke="#777" stroke-width="2"/>',
  help: '<path d="M2 1h21v22H2z" fill="#5d85b5" stroke="#26384d"/><path d="M2 1h5v22H2z" fill="#26384d"/><path d="M11 8c0-4 7-4 7 0 0 3-3 3-3 6M15 17v2" stroke="#fff" stroke-width="2" fill="none"/>',
  nnjoin: '<path d="M1 0h22v24H1z" fill="#ffd21f"/><path d="M4 11V3l5 8V3M14 11V3l5 8V3" stroke="#e00" stroke-width="2.400" fill="none"/><path d="M5 14v7l-2 1M8 17h3v4H8zM14 17v5M17 22v-5h4v5" stroke="#e00" stroke-width="2" fill="none"/>',
  ruler: '<path d="M2 1l21 21H2z" fill="#ccc" stroke="#999"/><path d="M7 12l6 6H7z" fill="#eee" stroke="#999"/><path d="M16 1l5 14" stroke="#aaa" stroke-width="3"/>',
  sh1: blob + '<path d="M12 12h11v11H12z" fill="#888"/><circle cx="17.500" cy="17.500" r="3" fill="none" stroke="#fff" stroke-width="1.500"/>',
  sh2: '<ellipse cx="8" cy="9" rx="6" ry="8.500" fill="#b9c3b2" stroke="#8f9a88"/><path d="M10 14l6-4 6 4v7l-5 2-6-2z" fill="#ccd3cc" stroke="#8f9a88"/>',
  sh3: blob + '<circle cx="9" cy="7" r="3" fill="#fff"/><path d="M12 12h11v11H12z" fill="#a99f80"/><path d="M17.500 14v7M14 17.500h7" stroke="#fff" stroke-width="2"/>',
  sh4: blob + blob2 + '<path d="M13 12h10v11H13z" fill="#a99f80"/><path d="M15.500 15l5 5M20.500 15l-5 5" stroke="#fff" stroke-width="2"/>',
  sh5: '<path d="M2 6c0-6 19-6 20-2 1 6-4 7-7 8-4 1-5 11-9 11-4 0-4-12-4-17z" fill="#b9c3b2" stroke="#8f9a88"/>',
  sh6: '<path d="M15 2c6-2 9 2 7 8s-8 6-10 10-9 4-10-1 4-7 7-9 2-6 6-8z" fill="#b4bda8" stroke="#8f9a88"/>',
  sh7: '<ellipse cx="7" cy="7" rx="5" ry="6" fill="#b9c3b2" stroke="#8f9a88"/><ellipse cx="18" cy="7" rx="5" ry="6" fill="#b9c3b2" stroke="#8f9a88"/><path d="M9 13l7 7M16 13l-7 7" stroke="#777" stroke-width="2"/><circle cx="8" cy="21" r="2" fill="none" stroke="#a66" stroke-width="1.500"/><circle cx="17" cy="21" r="2" fill="none" stroke="#a66" stroke-width="1.500"/>',
  sh8: '<ellipse cx="7" cy="7" rx="5" ry="6" fill="#b9c3b2" stroke="#8f9a88"/><ellipse cx="18" cy="7" rx="5" ry="6" fill="#b9c3b2" stroke="#8f9a88"/><path d="M12 3c-5 8-2 10 2 19" stroke="#777" stroke-width="1.500" fill="none"/>',
  sh9: '<path d="M2 3h20M2 12h20M2 21h20" stroke="#aaa" stroke-width="2.500"/><path d="M12 1l4 5H8zM12 23l4-5H8z" fill="#999"/><rect x="8" y="8" width="8" height="8" fill="#c6ccc0" stroke="#999"/>',
  sh10: '<path d="M12 2C2 6 1 16 6 22M12 2l10 6-10 4zM14 12l6 10H8z" fill="#ccc" stroke="#888" stroke-width="1.500"/>',
  raster: '<path d="M1 1h18v18H1z" fill="#6d97c4"/><path d="M1 1h6v6H1zM13 1h6v6h-6zM7 7h6v6H7zM1 13h6v6H1z" fill="#243d5c"/>' + G,
  comma: '<path d="M4 6c0-6 10-6 10 2 0 6-4 9-9 10 3-3 4-5 4-7-3 1-5-1-5-5z" fill="#5d8bc0" stroke="#345a86"/>' + G,
  virt: '<path d="M1 1h20v20H1z" fill="#b9d0e6" stroke="#88a8c8"/><path d="M4 4l5 13L16 4" fill="none" stroke="#4a5560" stroke-width="1.500"/>' + G,
  pg: '<path d="M2 3c3-3 17-3 20 0 1 5 0 10-3 13l-4-1v7h-4l-1-6-4 1C3 13 1 8 2 3z" fill="#5d8bc0" stroke="#2f5072"/><path d="M8 4v9M15 4c-2 4-2 7 0 11" stroke="#2f5072" fill="none"/>',
  wmsadd: globe('#a9c8e8', '#4d79a8') + G, wcsadd: globe('#7fa6cf', '#2f5072', 1) + G, wfsadd: globe('#edf4fb', '#78a5d4', 1) + '<path d="M7 6l4 11 5-11" fill="none" stroke="#333" stroke-width="1.500"/>' + G,
  wms: globe('#a9c8e8', '#4d79a8'), wcs: globe('#7fa6cf', '#2f4a68', 1), ows: globe('#edf4fb', '#78a5d4', 1), wfs: globe('#edf4fb', '#78a5d4', 1) + '<path d="M7 6l4 11 5-11" fill="none" stroke="#333" stroke-width="1.500"/>',
  arcm: globe('#7fa6cf', '#35597f') + '<g fill="#eee" stroke="#333"><circle cx="5" cy="16" r="2.500"/><circle cx="9" cy="20" r="2.500"/></g>', arcf: globe('#dbe9f6', '#6a97c9', 1) + '<path d="M9 17l7-11" stroke="#333" stroke-width="1.500"/><g fill="#eee" stroke="#333"><circle cx="5" cy="16" r="2.500"/><circle cx="9" cy="20" r="2.500"/></g>',
  geonode: '<path d="M12 1v22M3 6l18 12M21 6L3 18" stroke="#5d8bc0" stroke-width="3.600" stroke-linecap="round"/>',
  mssql: '<path d="M2 1c6 4 14 5 20 9-6 4-13 5-20 13 3-8 3-14 0-22z" fill="#5d8bc0" stroke="#35597f"/><path d="M8 4c2 5 2 8 0 14M14 6c2 4 2 6 0 9" stroke="#2f4d6c" fill="none"/>',
  oracle: '<rect x="1.500" y="4.500" width="21" height="15" rx="4" fill="#6d97c4" stroke="#35597f" stroke-width="2.500"/>',
  db2: '<rect x="0" y="0" width="24" height="24" rx="2" fill="#6d97c4"/><path d="M2.500 8.500v6h2q2-3 0-6zM9.500 8.500v6h2.500q2-1.500 0-3h-2.500 2q2-1.500 0-3zM16.500 9q4-1.500 4 1.500l-4 4h5" fill="none" stroke="#fff"/>',
  star: '<path d="M12 0l3.500 8.500L24 9l-6.500 6L20 24l-8-5-8 5 2.500-9L0 9l8.500-.500z" fill="#fcee5a" stroke="#d3b51c"/>',
  home: '<path d="M2 3h8l2 2h10v17H2z" fill="#f1f1f1" stroke="#777" stroke-width="1.300"/><path d="M7 14l5-5 5 5h-2v5H9v-5z" fill="none" stroke="#333" stroke-width="1.500"/>',
  dir: '<path d="M2 3h8l2 3h10v16H2z" fill="#f1f1f1" stroke="#888" stroke-width="1.300"/>',
  newlayer: '<path d="M2 2h17v18H2z" fill="#f4f4f4" stroke="#777" stroke-width="1.500"/>' + G,
  removelayer: '<path d="M2 2h17v18H2z" fill="#f4f4f4" stroke="#777" stroke-width="1.500"/><rect x="14" y="14" width="9" height="9" rx="1" fill="#e5484d"/><path d="M16 18.500h5" stroke="#fff" stroke-width="2"/>',
  filter: '<path d="M2 2h20v4l-7 8v9h-5v-9L2 6z" fill="#5d8bc0" stroke="#3c618a"/><path d="M2 1h20v4H2z" fill="#ffe44d" stroke="#b89b10" stroke-width=".8"/>',
  collapse: grp + '<path d="M17 1l6 7h-4v14h-4V8h-4z" fill="#4474a8" stroke="#2f5072"/>',
  expand: grp + '<path d="M17 22l6-7h-4V2h-4v13h-4z" fill="#4474a8" stroke="#2f5072"/>',
  info: '<circle cx="12" cy="12" r="11" fill="#5f90c8"/><path d="M13 5v2M11 10h2l-1 7h2" stroke="#fff" stroke-width="2.600" fill="none"/>',
  brush: '<path d="M1 12l8 2 4 8-9 1z" fill="#e03a3a"/><path d="M3 7l8-2 5 6-8 6-6-4z" fill="#6d97c4"/><path d="M5 4h9l2 5-8 3z" fill="#ffe13b"/><path d="M8 15l7-7 5 4-6 9z" fill="#e0a458"/><path d="M16 9l7-7" stroke="#d59a3c" stroke-width="3"/>',
  group: '<path d="M2 9h10v13H2zM6 6h10v13H6zM10 3h10v13H10z" fill="#f2f2f2" stroke="#777" stroke-width="1.300"/><path d="M13 14V1" stroke="#4474a8" stroke-width="2.500"/>' + G,
  eye: '<path d="M1 12c5-9 17-9 21 0-5 8-16 8-21 0z" fill="#eee" stroke="#999" stroke-width="1.500"/><circle cx="12" cy="12" r="5" fill="#5d8bc0"/><circle cx="12" cy="12" r="2" fill="#222"/><path d="M16 19h8l-4 5z" fill="#555"/>',
  epsfilter: '<path d="M11 2C5-1 0 3 5 7c-6 2-3 9 6 6" fill="none" stroke="#6a3d7c" stroke-width="2.600"/><path d="M11 13h12l-4 5v6h-4v-6z" fill="#ccc" stroke="#888"/>',
  float: '<rect x=".7" y=".7" width="14.600" height="14.600" rx="2" fill="none" stroke="#666" stroke-width="1.400"/><path d="M4 7h6v5H4zM6.500 6.500V3.500h6v5.500h-2" fill="none" stroke="#666" stroke-width="1.200"/>',
  close: '<rect x=".7" y=".7" width="14.600" height="14.600" rx="2" fill="none" stroke="#666" stroke-width="1.400"/><path d="M4 4l8 8M12 4l-8 8" stroke="#555" stroke-width="2.600"/>',
  check: '<path d="M3 8l4 5.500 6-12" fill="none" stroke="#111" stroke-width="2.200"/>',
  search: '<circle cx="6.500" cy="6.500" r="5" fill="none" stroke="#909090" stroke-width="1.500"/><path d="M10 10.500l5 5" stroke="#909090" stroke-width="2"/>',
  down: '<path d="M1 3.500h10L6 9z" fill="#4d4d4d"/>',
  down2: '<path d="M.500 1.500h15L8 11z" fill="#333"/>',
  right: '<path d="M3 0l6 7-6 7z" fill="#555"/>',
  spin: '<path d="M1.500 9L6 4l4.500 5zM1.500 15L6 20l4.500-5z" fill="#666"/>',
  mouse: '<path d="M3 4l8-3 8 8 2 9-5 5-6-3-8-9z" fill="#ddd" stroke="#333" stroke-width="1.500"/><path d="M4 12L14 3M7 16l11-9M10 20l11-9M18 4l4-3" stroke="#333" stroke-width="1.800"/>',
  lock: '<path d="M4 12V6c0-6 12-6 12 0v6" fill="none" stroke="#999" stroke-width="2.500"/><rect x="2" y="11" width="16" height="12" rx="2" fill="#5c5c5c"/>',
  globegray: '<path d="M2 12h20c0 14-20 14-20 0z" fill="#ddd" stroke="#777"/><path d="M0 12C3 9 4 3 12 1c8 2 9 8 12 11z" fill="#888" stroke="#666"/><path d="M12 1v22M5 7h14M3 17h18M8 2.500c-3 6-3 14 0 19.500M16 2.500c3 6 3 14 0 19.500" stroke="#666" fill="none"/>',
  bubble: '<ellipse cx="12" cy="11" rx="11" ry="9.500" fill="#6b6b6b"/><path d="M12 18l8 6-1-8z" fill="#6b6b6b"/><g fill="#fff"><rect x="6" y="8" width="3" height="5"/><rect x="10.500" y="8" width="3" height="5"/><rect x="15" y="8" width="3" height="5"/></g>',
  tools: '<path d="M3 22L13 11" stroke="#2f6bab" stroke-width="4.500"/><path d="M1 1l4 2 7 9-2 1L3 5z" fill="#a9bfd6" stroke="#7d9cbb"/><path d="M12 12l10 10" stroke="#b3743c" stroke-width="4"/><path d="M12 2c5-2 9 0 11 6l-3 1-3-3-6 6-2-2 5-5z" fill="#2c4a68"/>',
  meta: '<path d="M3 1h13l4 4v18H3z" fill="#fff" stroke="#ccc"/><path d="M6 7h9M6 11h9M6 15h11M6 19h11" stroke="#999"/><path d="M14 16l2-6 5-8 3 2-5 8z" fill="#e56a2c" stroke="#a84516" stroke-width=".6"/>',
  crs: '<path d="M3 12h18c0 15-18 15-18 0z" fill="#b3dcff" stroke="#4d8fd0"/><path d="M0 12C3 9 4 3 12 0c8 3 9 9 12 12z" fill="#c9d1d9" stroke="#78828c"/><path d="M12 0v23M5 7h14M3 17h18M8 2c-3 6-3 14 0 20M16 2c3 6 3 14 0 20" stroke="#6b8fb3" fill="none" stroke-width=".9"/>',
  rel: '<path d="M12 6h5v6" stroke="#444" fill="none"/><path d="M1 0h11v12H1zM13 12h11v12H13z" fill="#e3e3e3"/><path d="M1 2h11M13 14h11" stroke="#aaa" stroke-width="3"/><path d="M3 6h7M3 9h7M15 18h7M15 21h7" stroke="#888" stroke-width="1.500" stroke-dasharray="3 1"/>',
  eps: '<path d="M18 6V2.500C10-.500 4 3 8 9c2 2 4 2.500 6 2.500C4 12 2 23 12 22c3 0 5-1 7-3v-3" fill="none" stroke="#5f3a70" stroke-width="3"/>',
  macro: '<circle cx="14" cy="10" r="7.500" fill="#6a97c9" stroke="#eee" stroke-width="3.500"/><path d="M14 0v3M14 17v3M4 10h3M21 10h3M7 3l2 2M19 15l2 2M21 3l-2 2M7 17l2-2" stroke="#eee" stroke-width="3"/><path d="M12 6l6 4-6 4z" fill="#fff"/><circle cx="4" cy="20" r="3" fill="#6a97c9" stroke="#ddd" stroke-width="1.500"/>',
  server: '<path d="M0 3h24v18H0z" fill="#d8dce0"/><path d="M4 6h17v11H4z" fill="#f2f6fa"/><path d="M5 6h8l-3 4-4 6zM13 11l4-4 4 2v4l-5 3z" fill="#4b83c4"/><path d="M1 3v18" stroke="#999" stroke-width="2"/><path d="M18 20l5-5v5z" fill="#555"/>'
};
const svg = (n, cls) => `<svg viewBox="0 0 24 24" class="${cls}">${I[n]}</svg>`;
const arrow = o => `<span class="w-[17.6px] shrink-0 flex justify-center ${o ? 'opacity-50' : ''}"><svg viewBox="0 0 12 12" class="size-3">${I.down}</svg></span>`;
const dots = '<svg class="w-[5px] h-[26px]"><path d="M1 1v24M4 1v24" stroke="#b5b5b5" stroke-width="1.300" stroke-dasharray="1.500 2"/></svg>';

document.querySelectorAll('[data-bar]').forEach(bar => {
  bar.innerHTML = bar.dataset.bar.split(' ').map(t => {
    if (t === 'h') return `<span class="w-[18px] flex justify-center">${dots}</span>`;
    if (t === 'H') return `<span class="w-[23.5px] pl-[4px] flex justify-center">${dots}</span>`;
    if (t[0] === 'a' && t.length < 3) return arrow(t[1]);
    const off = t.endsWith('-'), on = t.endsWith('!'), n = t.replace(/[-!]/, '');
    return `<span class="w-[36.4px] shrink-0 flex items-center justify-center">${on ? `<span class="w-[34px] h-[33px] shrink-0 rounded-[3px] border border-[#9d9d9d] bg-[#dcdcdc] flex items-center justify-center">${svg(n, 'size-[23px]')}</span>` : svg(n, off ? 'size-[23px] opacity-35 grayscale-[70%]' : 'size-[23px]')}</span>`;
  }).join('');
});
document.querySelectorAll('svg[data-i]').forEach(s => s.innerHTML = I[s.dataset.i]);

document.getElementById('menu').innerHTML = [['Pro', 'y', 'ecto', 68], ['', 'E', 'dición', 56], ['', 'V', 'er', 25], ['', 'C', 'apa', 39], ['Con', 'f', 'iguración', 110], ['Co', 'm', 'plementos', 118], ['Vect', 'o', 'rial', 65], ['', 'R', 'áster', 46], ['Base de ', 'd', 'atos', 105], ['', 'W', 'eb', 35], ['Pro', 'c', 'esos', 68], ['A', 'y', 'uda', 49]]
  .map(m => `<span data-w="${m[3]}" class="whitespace-nowrap">${m[0]}<span class="underline underline-offset-2">${m[1]}</span>${m[2]}</span>`).join('');

document.getElementById('strip').innerHTML = ['vadd', 'raster', 'comma', 'featheradd', 'virt', 'pg+a', 'wmsadda', 'wcsadd', 'wfsadda', 'vnewa']
  .map(n => { const a = /a$/.test(n) && n !== 'comma' && n !== 'raster', k = n.replace(/a$/, m => a ? '' : m), p = k === 'pg+';
    return `<span class="h-[35px] pl-[12px] flex items-center"><svg viewBox="0 0 24 24" class="size-[23px]">${p ? I.pg + G : I[k]}</svg>${a ? `<svg viewBox="0 0 12 12" class="ml-[9px] size-3">${I.down}</svg>` : ''}</span>`; }).join('');

document.getElementById('tree').innerHTML = [['star', 'Favoritos', 70], ['home', 'Inicio', 43, 1], ['dir', 'C:\\', 24, 1], ['dir', 'G:\\', 24, 1], ['gpkg', 'GeoPackage', 95], ['feather', 'SpatiaLite', 75], ['pg', 'PostGIS', 59], ['mssql', 'MSSQL', 56], ['oracle', 'Oracle', 50], ['db2', 'DB2', 31], ['wms', 'WMS/WMTS', 99], ['wms', 'XYZ Tiles', 70, 1], ['wcs', 'WCS', 37], ['wfs', 'WFS', 34], ['ows', 'OWS', 38], ['arcm', 'ArcGisMapServer', 132], ['arcf', 'ArcGisFeatureServer', 153], ['geonode', 'GeoNode', 73]]
  .map(r => `<div class="h-[26.26px] flex items-center"><span class="w-[25px] flex justify-center">${r[3] ? `<svg viewBox="0 0 12 14" class="w-3 h-3.5">${I.right}</svg>` : ''}</span>${svg(r[0], 'ml-[7px] size-[23px]')}<span data-w="${r[2]}" class="ml-[9px] whitespace-nowrap">${r[1]}</span></div>`).join('');

document.getElementById('tabs').innerHTML = [['tools', [['General', 57]]], ['meta', [['Metadatos', 81]]], ['crs', [['SRC', 30]]], ['brush', [['Estilos', 48], ['predeterminados', 131]]], ['table', [['Fuentes de datos', 129]]], ['rel', [['Relaciones', 81]]], ['eps', [['Variables', 66]]], ['macro', [['Macros', 56]]], ['server', [['Servidor de QGIS', 128]]]]
  .map((t, i) => `<div class="h-[52.9px] flex items-center ${i ? 'pl-[6px]' : 'pl-[10px] bg-[#efefef] text-black'}">${svg(t[0], 'size-9 shrink-0')}<span class="ml-3 flex flex-col items-start gap-[5px]">${t[1].map(l => `<span data-w="${l[1]}" class="whitespace-nowrap">${l[0]}</span>`).join('')}</span></div>`).join('');

const swatch = c => `<span class="w-[24px] h-[23px] border-2 ${c === '#ffffff' ? 'border-[#444]' : 'border-[#c6c6c6]'}" style="background:${c}"></span>`;
document.getElementById('recent').innerHTML = ['#ffffff', '#ff0f8c', '#00cbd6', '#00e6f0', '#123a8c', '#dc1c1c', '#2070ff', '#440154', '#e5b636', '#505f9c', '#8992ba', '#a5735a', '#35ff35', '#9dff1c', '#dd5c9f', '#00d8bf', '#3d5aff', '#b7484b', '#de2784', '#ffffcc'].map(swatch).join('');
document.getElementById('standard').innerHTML = ['#000000', '#ffffff', '#a6cee3', '#1f78b4', '#b2df8a', '#33a02c', '#fb9a99', '#e31a1c', '#fdbf6f', '#ff7f00'].map(swatch).join('');

/* call network: hubs [x, y, rays, reach, core size] joined to their neighbours */
let seed = 11;
const rnd = () => (seed = (seed * 16807) % 2147483647) / 2147483647;
const hubs = [[2405,1161,9,16,4],[2389,1187,5,10,7],[2397,1205,10,22,5],[2357,1189,14,26,5],[2445,1196,9,24,4],[2443,1211,4,8,4],[2418,1230,8,16,4],[2414,1274,12,22,6],[2448,1275,8,18,9],[2463,1288,8,22,4],[2357,1279,8,24,5],[2425,1328,34,38,17],[2404,1336,24,32,8],[2503,1323,18,32,5],[2518,1352,22,34,5],[2363,1363,16,28,11],[2423,1377,14,24,9],[2470,1389,10,22,6],[2488,1381,10,20,6],[2493,1358,8,22,3],[2470,1404,12,24,4],[2423,1415,14,26,7],[2410,1403,7,18,4],[2560,1404,22,36,4],[2387,1433,14,24,7],[2455,1452,20,30,4],[2498,1461,12,20,12],[2494,1436,6,12,4],[2412,1479,14,26,6],[2517,1480,9,20,4],[2528,1449,8,18,3],[2558,1494,14,20,6],[2575,1470,16,16,3],[2362,1510,34,40,14],[2374,1522,12,24,5],[2468,1522,26,38,5],[2537,1533,20,28,6],[2515,1559,20,26,6],[2432,1577,14,24,6],[2367,1584,10,24,6],[2457,1570,10,22,5],[2445,1590,10,18,4],[2547,1605,18,30,4],[2610,1585,10,22,4],[2621,1580,12,14,6],[2612,1629,32,36,5],[2487,1645,28,40,8],[2417,1652,8,18,5],[2379,1671,8,18,6],[2440,1677,20,32,6],[2573,1693,14,28,5],[2618,1662,12,16,4],[2403,1701,34,44,7],[2593,1729,5,10,6],[2504,1697,10,18,3],[2513,1740,16,30,4],[2358,1731,18,38,6],[2358,1671,6,14,5],[2387,1748,9,22,1],[2637,1705,4,14,1],[2600,1560,5,22,1],[2583,1415,5,10,1],[2475,1612,8,30,1],[2380,1395,9,26,2],[2500,1404,7,18,3]];
let thin = '', core = '';
const wig = (x0, y0, x1, y1, a, b = 0) => { let s = `M${x0.toFixed(1)} ${y0.toFixed(1)}`; const d = Math.hypot(x1 - x0, y1 - y0) || 1, n = Math.max(3, d / 7 | 0), c = (rnd() - .5) * b;
  for (let i = 1; i <= n; i++) { const o = Math.sin(i / n * 3.14) * c, e = i < n ? a : 0; s += `L${(x0 + (x1 - x0) * i / n - (y1 - y0) / d * o + (rnd() - .5) * e).toFixed(1)} ${(y0 + (y1 - y0) * i / n + (x1 - x0) / d * o + (rnd() - .5) * e).toFixed(1)}`; } return s; };
hubs.forEach(([x, y, n, L, c], k) => {
  for (let i = 0; i < n; i++) { const t = rnd() * 6.283, l = L * (.3 + rnd() * .8); thin += wig(x, y, x + Math.cos(t) * l, y + Math.sin(t) * l * .85, 3, l * .3);
    if (rnd() > .6) { const q = l * .6, u = t + (rnd() - .5) * 1.3; thin += wig(x + Math.cos(t) * q, y + Math.sin(t) * q * .85, x + Math.cos(u) * (q + 10), y + Math.sin(u) * (q + 10) * .85, 3); } }
  let p = ''; for (let i = 0; i < 14; i++) { const r = c * (.4 + rnd() * .8), t = i / 14 * 6.283; p += (i ? 'L' : 'M') + (x + Math.cos(t) * r * 1.1).toFixed(1) + ' ' + (y + Math.sin(t) * r * .75).toFixed(1); } core += p + 'z';
  hubs.map((h, j) => [Math.hypot(h[0] - x, h[1] - y), j]).filter(d => d[1] !== k).sort((a, b) => a[0] - b[0]).slice(0, 7).forEach(([d, j]) => { if (d < 80) thin += wig(x, y, hubs[j][0], hubs[j][1], 4, d * .5); });
});
const fringe = 'M2354 767l8-3 8 1 7-5M2354 771l12-4 10-5M2358 768l8 8 4 6-1 12M2356 786l8-2 6 4-3 8M2373 758l1 10M2354 821l6 6 7 2 2 12-4 16-11 6M2354 911l6 1 7-2M2354 945l6 12 7-2M2354 950l13 7-10 6M2354 1056l5 5-2 8 6 8M2354 1075l10-2M2354 1107l13 2-8 8M2380 1150l-6 18-10 9-8 8M2354 1152l14 7 6 15 M2438 1192l-20-12M2450 1193l10-12M2462 1286l18-27M2480 1258l-8 10M2480 1290l20 8 12-4M2500 1290q-8-10 6-6M2530 1300l14 18M2548 1390l8-12 20 12M2587 1412l-2 26M2615 1534l-20 8-22 40M2612 1534l4 40M2646 1705l2 14M2604 1746l12-44M2604 1746l-10-14M2573 1693l50 46M2573 1693l52-24M2470 1750l22-6 22-2 30 0M2354 1757l36 6 20-8M2354 1584l66 2M2354 1668l50 4M2354 1600l30 4 22 36 12 12M2612 1629l28 26';
const south = 'M2030 1884l20 10-4-14M2048 1892l14 5 14 14 8 9 9 4M2049 1890v12M2075 1882l13 14 6 10 6 4M2090 1882l9 10 8 4M2062 1880l-15 12M2112 1880l10 8';
document.getElementById('map').innerHTML = `<path d="${thin}" stroke-width="1.100" opacity=".85"/><path d="${core}" fill="#c43c3a"/><path d="${fringe}" stroke-width="1.500"/><path d="${south}" stroke-width="2" opacity=".9"/>`;

/* set each label to its nominal width by tracking */
const fitLabels = () => document.querySelectorAll('[data-w]').forEach(e => {
  e.style.letterSpacing = '0px';
  if (getComputedStyle(e).display === 'inline') e.style.display = 'inline-block';
  e.style.whiteSpace = 'nowrap'; e.style.flexShrink = '0';
  const r = document.createRange(); r.selectNodeContents(e);
  e.style.letterSpacing = ((+e.dataset.w - r.getBoundingClientRect().width) / e.textContent.length).toFixed(3) + 'px';
});
fitLabels();
addEventListener('load', () => { fitLabels(); requestAnimationFrame(fitLabels); document.fonts.ready.then(fitLabels); setTimeout(fitLabels, 100); });
</script>
</body>
</html>
